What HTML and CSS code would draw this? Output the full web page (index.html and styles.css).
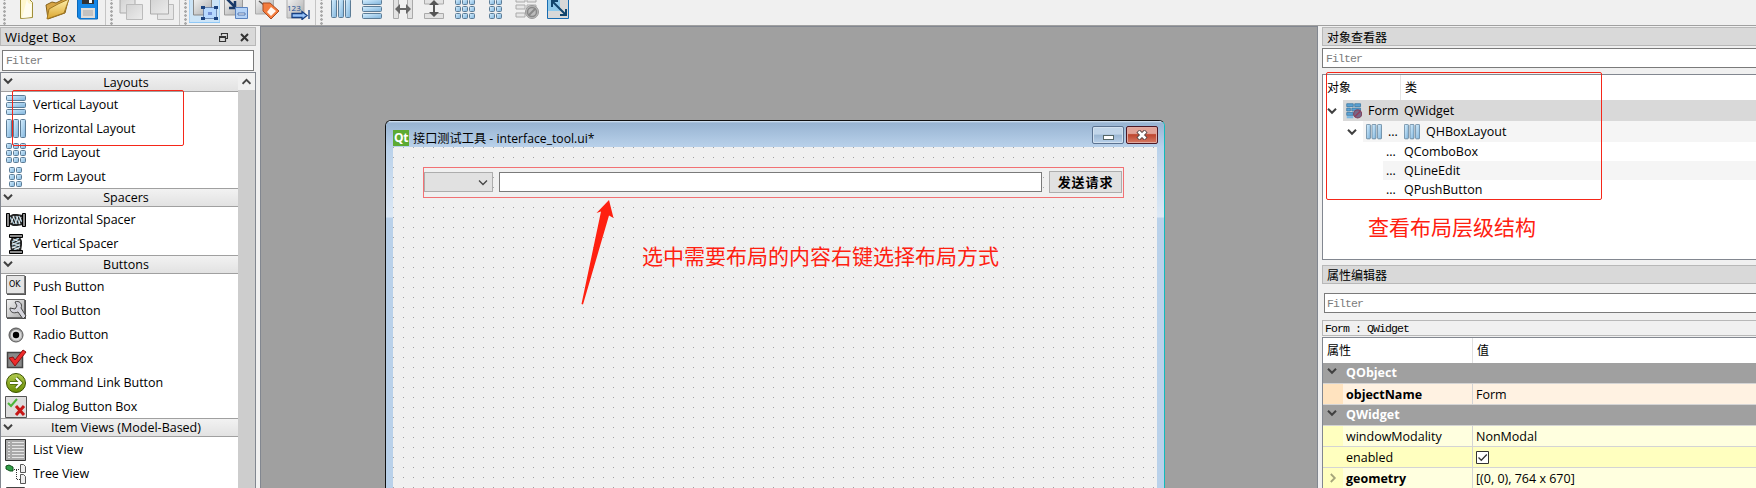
FILE: index.html
```html
<!DOCTYPE html>
<html lang="zh">
<head>
<meta charset="utf-8">
<title>Qt Designer</title>
<link rel="stylesheet" href="styles.css">
</head>
<body>
<svg class="defs" width="0" height="0">
  <defs>
    <linearGradient id="blue" x1="0" y1="0" x2="1" y2="1"><stop offset="0" stop-color="#d8f0ff"/><stop offset="1" stop-color="#7fb4dc"/></linearGradient>
    <linearGradient id="gray" x1="0" y1="0" x2="1" y2="1"><stop offset="0" stop-color="#f4f4f4"/><stop offset="1" stop-color="#aaa"/></linearGradient>
    <linearGradient id="lgray" x1="0" y1="0" x2="1" y2="1"><stop offset="0" stop-color="#d2d2d2"/><stop offset="1" stop-color="#ececec"/></linearGradient>
    <linearGradient id="dgray" x1="0" y1="0" x2="1" y2="1"><stop offset="0" stop-color="#777"/><stop offset="1" stop-color="#d0d0d0"/></linearGradient>
    <linearGradient id="gold" x1="0" y1="0" x2="0" y2="1"><stop offset="0" stop-color="#fff0ad"/><stop offset="1" stop-color="#dba52d"/></linearGradient>
    <linearGradient id="green" x1="0" y1="0" x2="0" y2="1"><stop offset="0" stop-color="#b3cc51"/><stop offset="1" stop-color="#688c00"/></linearGradient>
    <symbol id="hbox" viewBox="0 0 20 20"><g fill="url(#blue)" stroke="#5c7c96"><rect x=".5" y=".5" width="5" height="18" rx="1"/><rect x="7.500" y=".5" width="5" height="18" rx="1"/><rect x="14.500" y=".5" width="5" height="18" rx="1"/></g></symbol>
    <symbol id="vbox" viewBox="0 0 20 20"><g fill="url(#blue)" stroke="#5c7c96"><rect x=".5" y=".5" width="19" height="5" rx="1"/><rect x=".5" y="7.500" width="19" height="5" rx="1"/><rect x=".5" y="14.500" width="19" height="5" rx="1"/></g></symbol>
    <symbol id="cells" viewBox="0 0 6 20"><g fill="url(#blue)" stroke="#5c7c96"><rect x=".5" y=".5" width="5" height="5" rx="1"/><rect x=".5" y="7.500" width="5" height="5" rx="1"/><rect x=".5" y="14.500" width="5" height="5" rx="1"/></g></symbol>
    <symbol id="grid" viewBox="0 0 20 20"><use href="#cells" x="0" width="6" height="20"/><use href="#cells" x="7" width="6" height="20"/><use href="#cells" x="14" width="6" height="20"/></symbol>
    <symbol id="formlay" viewBox="0 0 20 20"><use href="#cells" x="3" width="6" height="20"/><use href="#cells" x="10" width="6" height="20"/></symbol>
    <symbol id="chev" viewBox="0 0 10 8"><path d="M1 1.800 5 5.800 9 1.800" fill="none" stroke="#404040" stroke-width="2"/></symbol>
    <symbol id="spring" viewBox="1 1 20 20"><path d="M4 7 8 5h4l6 1v10l-6 1H8l-4-2z" fill="#222"/><path d="m5 8 4 7M8 7l4 8m-1-8 4 8m-1-8 3 6" stroke="#a9c7d5" stroke-width="1.500"/><path d="m6 14 3-7m1 8 3-8m1 8 2-7" stroke="#eee"/><path d="M1.500 4.500h3v13h-3zM17.500 4.500h3v13h-3z" fill="#8a8a8a" stroke="#000"/></symbol>
  </defs>
</svg>
<div class="app">
  <header class="toolbar">
    <i class="grip first"></i>
    <span class="tool"><svg viewBox="0 0 22 22"><path d="M5.500.500h8l4 4v15l-12 1z" fill="#fff8cf" stroke="#a08f39"/><path d="M12 1c1 4 1 5 5 5l-1 13-9 1z" fill="#fffdf0"/></svg></span>
    <span class="tool"><svg class="wide" viewBox="0 0 26 22"><path d="M2 7 8 4l4 1 10-5 2 3-3 12-17 6z" fill="#d7a545" stroke="#85611b"/><path d="m5 11 9-5 11-5-5 14-17 6z" fill="url(#gold)" stroke="#a17823"/></svg></span>
    <span class="tool"><svg viewBox="0 0 22 22"><path d="M.500 0h20v21h-18l-2-2z" fill="#1688e8" stroke="#0968ba"/><path d="M5 0h12v6H5z" fill="#333"/><path d="M12 1h3v4h-3z" fill="#fff"/><path d="M4 10h14v10H4z" fill="#e0ddd9"/><path d="M6 13h10M6 15h10M6 17h10" stroke="#a7a7a7"/></svg></span>
    <i class="sep"></i><i class="grip"></i>
    <span class="tool"><svg class="wide" viewBox="0 0 26 22"><path d="M2 1h15v14H2z" fill="url(#lgray)" stroke="#aaa"/><path d="M8.500 6.500h16v15h-16z" fill="url(#lgray)" stroke="#bbb"/></svg></span>
    <span class="tool"><svg class="wide" viewBox="0 0 26 22"><path d="M8.500 6.500h16v15h-16z" fill="#e6e6e6" stroke="#bbb"/><path d="M1.500 0h18v16h-18z" fill="url(#lgray)" stroke="#aaa"/></svg></span>
    <i class="sep"></i><i class="grip"></i>
    <span class="tool active"><svg class="wide" viewBox="0 0 26 22"><path d="M1.500 0h18v17h-18z" fill="url(#gray)" stroke="#888"/><path d="M11.500 9.500h13v11h-13z" fill="#b7d9ff" stroke="#203f78" stroke-dasharray="1 1"/><path d="M9 8h4v3H9zm13 0h4v3h-4zM9 19h4v3H9zm13 0h4v3h-4z" fill="#1b427f"/><path d="M16 14h4v3h-4z" fill="#7491d6"/></svg></span>
    <span class="tool"><svg class="wide" viewBox="0 0 26 22"><path d="M1.500 0h18v17h-18z" fill="url(#gray)" stroke="#999"/><path d="m3 0 9 9M12 3v7H6" fill="none" stroke="#193968" stroke-width="2.500"/><path d="M12.500 9.500h12v11h-12z" fill="#b5d3f7" stroke="#5a82be"/><path d="M15 15h7v2h-7z" fill="#fff" stroke="#5477ae"/></svg></span>
    <span class="tool"><svg class="wide" viewBox="0 0 26 22"><path d="M1.500 0h18v16h-18z" fill="url(#gray)" stroke="#aaa"/><path d="m5 3 5 4" stroke="#555" stroke-width="1.500"/><path d="M9 5h7l9 8-8 8-8-8z" fill="#f47c3d" stroke="#a94c23"/><path d="m17 9 5 4-5 5-4-4z" fill="#fff7f0"/></svg></span>
    <span class="tool"><svg class="wide" viewBox="0 0 26 22"><path d="M2 0h17v20H2z" fill="url(#gray)" stroke="#aaa"/><text x="2" y="13" class="num">123</text><path d="M7 15.500h10v-2l5 4-5 4v-2H7zM24 12v9" fill="#96c3fa" stroke="#163f83" stroke-width="1.300"/></svg></span>
    <i class="sep"></i><i class="grip"></i>
    <span class="tool"><svg class="lay"><use href="#hbox"/></svg></span>
    <span class="tool"><svg class="lay"><use href="#vbox"/></svg></span>
    <span class="tool"><svg viewBox="0 0 22 22"><path d="M1.500 0v20.500h5V0m9 0v20.500h5V0" fill="#e2e2e2" stroke="#aaa"/><path d="m3 11 5-5v4h6V6l5 5-5 5v-4H8v4z" fill="#666"/></svg></span>
    <span class="tool"><svg viewBox="0 0 22 22"><path d="M1.500 0v6h19V0m-19 20.500v-5h19v5z" fill="#e2e2e2" stroke="#aaa"/><path d="m11 2 5 5h-4v7h4l-5 5-5-5h4V7H6z" fill="#555"/></svg></span>
    <span class="tool"><svg class="lay"><use href="#grid"/></svg></span>
    <span class="tool"><svg class="lay"><use href="#formlay"/></svg></span>
    <span class="tool"><svg class="wide" viewBox="0 0 26 22"><path d="M2 0h9v4H2zm11 0h9v4h-9zM2 7h9v4H2zm0 8h9v4H2zm11-8h9v4h-9z" fill="#e6e6e6" stroke="#aaa"/><circle cx="18" cy="14" r="6.500" fill="#bbb" stroke="#999"/><path d="m14.500 17.500 7-7" stroke="#888" stroke-width="2"/><circle cx="18" cy="14" r="4.500" fill="none" stroke="#888" stroke-width="1.500"/></svg></span>
    <span class="tool"><svg viewBox="0 0 22 22"><path d="M.500 0h21v20.500H.500z" fill="#d8d8d8" stroke="#176cb2"/><path d="M1 0h12v13H1z" fill="#8fcaec"/><path d="m6 4 12 12M5 9V3h6m8 8v6h-6" fill="none" stroke="#12466e" stroke-width="2"/></svg></span>
  </header>

  <main class="work">
    <aside class="widgets">
      <div class="dock-title"><span>Widget Box</span>
        <svg class="dock-ico" viewBox="0 0 9 9"><path d="M2.500 2.500v-2h6v5h-2M.500 3.500h6v5h-6zM.500 4.500h6" fill="none" stroke="#333" stroke-width="1.200"/></svg>
        <svg class="dock-ico x" viewBox="0 0 9 9"><path d="m1 1 7 7m0-7-7 7" stroke="#333" stroke-width="2"/></svg>
      </div>
      <div class="filter">Filter</div>
      <div class="list-box">
        <div class="list">
          <h3><svg class="chev"><use href="#chev"/></svg>Layouts</h3>
          <div class="item"><svg><use href="#vbox"/></svg>Vertical Layout</div>
          <div class="item"><svg><use href="#hbox"/></svg>Horizontal Layout</div>
          <div class="item"><svg><use href="#grid"/></svg>Grid Layout</div>
          <div class="item"><svg><use href="#formlay"/></svg>Form Layout</div>
          <h3><svg class="chev"><use href="#chev"/></svg>Spacers</h3>
          <div class="item"><svg><use href="#spring"/></svg>Horizontal Spacer</div>
          <div class="item"><svg class="turn"><use href="#spring"/></svg>Vertical Spacer</div>
          <h3><svg class="chev"><use href="#chev"/></svg>Buttons</h3>
          <div class="item up"><svg viewBox="0 0 22 22"><path d="M2 2h19v19H2z" fill="#555"/><path d="M1.500 1.500h18v18h-18z" fill="#e4e4e4" stroke="#777"/><text x="4" y="13" class="ok">OK</text></svg>Push Button</div>
          <div class="item up"><svg viewBox="0 0 22 22"><path d="M2 2h19v19H2z" fill="#555"/><path d="M1.500 1.500h18v18h-18z" fill="url(#gray)" stroke="#666"/><path d="M10 4c4-2 8 2 6 6l5 8-3 3-5-7c-5 2-8 0-8-4l5 1 2-3z" fill="#d5d5dc" stroke="#444"/></svg>Tool Button</div>
          <div class="item"><svg viewBox="0 0 22 22"><circle cx="11" cy="11" r="7" fill="url(#dgray)" stroke="#555"/><circle cx="11" cy="11" r="5.200" fill="#ddd"/><circle cx="11" cy="11" r="3.200"/></svg>Radio Button</div>
          <div class="item"><svg viewBox="0 0 22 22"><path d="M2.500 4.500h15v15h-15z" fill="#888" stroke="#444" stroke-width="1.500"/><path d="m4 10 4-1 2 3L18 2l3 2-11 14z" fill="#ee2a2a" stroke="#8b1111"/></svg>Check Box</div>
          <div class="item"><svg viewBox="0 0 22 22"><circle cx="11" cy="11" r="9.500" fill="url(#green)" stroke="#3b5200"/><path d="M5 11h10m-4-5 5 5-5 5" fill="none" stroke="#53700a" stroke-width="4"/><path d="M5 11h10m-4-5 5 5-5 5" fill="none" stroke="#fff" stroke-width="2"/></svg>Command Link Button</div>
          <div class="item"><svg viewBox="0 0 22 22"><path d="M.500.500h21v21H.500z" fill="#ddd" stroke="#555"/><path d="m3 7 3 3 6-7" fill="none" stroke="#4bb438" stroke-width="2"/><path d="m11 10 8 9m0-9-8 9" stroke="#c71717" stroke-width="3"/></svg>Dialog Button Box</div>
          <h3><svg class="chev"><use href="#chev"/></svg>Item Views (Model-Based)</h3>
          <div class="item"><svg viewBox="0 0 22 22"><path d="M.500.500h20v21H.500z" fill="#aaa" stroke="#333"/><path d="M3 3.500h2m2 0h12M3 6.500h2m2 0h12M3 9.500h2m2 0h12M3 12.500h2m2 0h12M3 15.500h2m2 0h12M3 18.500h2m2 0h12" stroke="#e6e6e6"/></svg>List View</div>
          <div class="item"><svg viewBox="0 0 22 22"><path d="m1 3 3-1 4 2v4H5L1 6z" fill="#2e9d45" stroke="#124f1d"/><path d="M9 6.500h5M11.500 7v10M12 16.500h3" fill="none" stroke="#333" stroke-dasharray="1 1"/><path d="M15.500 1.500h3l2 2v6h-5zm0 10h3l2 2v7h-5z" fill="#eee" stroke="#555"/></svg>Tree View</div>
          <div class="item"><svg viewBox="0 0 22 22"><path d="M1.500.500h18v20h-18z" fill="#ddd" stroke="#444"/></svg></div>
        </div>
        <div class="scroll"><div class="scroll-up"><svg viewBox="0 0 8 6"><path d="m.5 5 3.500-3.500L7.500 5" fill="none" stroke="#444" stroke-width="1.600"/></svg></div></div>
      </div>
      <div class="mark mark-left"></div>
    </aside>

    <section class="mdi">
      <div class="window">
        <div class="titlebar">
          <span class="qt">Qt</span><span class="caption">接口测试工具 - interface_tool.ui*</span>
          <span class="wbtn"><i></i></span>
          <span class="wbtn close"><svg viewBox="0 0 12 10"><path d="m2 1 8 8m0-8L2 9" stroke="#544" stroke-width="4.500"/><path d="m2.500 1.500 7 7m0-7-7 7" stroke="#fff" stroke-width="2.600"/></svg></span>
        </div>
        <div class="body">
          <div class="canvas">
            <div class="hlayout">
              <div class="combo"><svg viewBox="0 0 10 7"><path d="m1 1.500 4 4 4-4" fill="none" stroke="#444" stroke-width="1.300"/></svg></div>
              <div class="edit"></div>
              <div class="push">发送请求</div>
            </div>
          </div>
        </div>
      </div>
      <svg class="arrow" viewBox="0 0 36 106"><path d="M28 0 32.500 18 28 15.500 2 104.500 .5 104 20 11.500 15.500 13z" fill="#ff2010"/></svg>
      <div class="note note-main">选中需要布局的内容右键选择布局方式</div>
    </section>

    <aside class="inspect">
      <div class="dock-title">对象查看器</div>
      <div class="filter">Filter</div>
      <div class="tree">
        <div class="thead"><span>对象</span><span>类</span></div>
        <div class="trow r1"><svg class="chev"><use href="#chev"/></svg><div class="fill"><svg class="ti" viewBox="0 0 22 22"><path d="M1 1h9v4H1zm11 0h8v4h-8zM1 7h5v4H1zm7 0h12v4H8zM1 13h9v4H1zm11 0h8v4h-8z" fill="#5ba2d4" stroke="#34729f"/><path d="M1 18h9v3H1z" fill="#7ab8e2"/><circle cx="16" cy="15" r="5.500" fill="#766989" stroke="#82445f" stroke-width="1.500"/><path d="m12 19 8-8" stroke="#943e5c" stroke-width="2"/></svg><span class="nm">Form</span><span>QWidget</span></div></div>
        <div class="trow r2"><svg class="chev"><use href="#chev"/></svg><div class="fill"><svg class="ti"><use href="#hbox"/></svg><span class="nm">...</span><svg class="ti"><use href="#hbox"/></svg><span>QHBoxLayout</span></div></div>
        <div class="trow r3"><div class="fill"><span class="nm">...</span><span>QComboBox</span></div></div>
        <div class="trow r3 alt"><div class="fill"><span class="nm">...</span><span>QLineEdit</span></div></div>
        <div class="trow r3"><div class="fill"><span class="nm">...</span><span>QPushButton</span></div></div>
      </div>
      <div class="dock-title second">属性编辑器</div>
      <div class="filter inset">Filter</div>
      <div class="objname">Form : QWidget</div>
      <div class="props">
        <div class="phead"><span>属性</span><span>值</span></div>
        <div class="group"><svg class="chev"><use href="#chev"/></svg>QObject</div>
        <div class="prow peach"><i></i><b>objectName</b><span>Form</span></div>
        <div class="group"><svg class="chev"><use href="#chev"/></svg>QWidget</div>
        <div class="prow"><i></i><span class="key">windowModality</span><span>NonModal</span></div>
        <div class="prow deep"><i></i><span class="key">enabled</span><span><svg class="check" viewBox="0 0 13 13"><path d="M.500.500h12v12H.500z" fill="#fff" stroke="#333"/><path d="m2.500 6.500 2.800 2.800L10.800 3.500" fill="none" stroke="#333" stroke-width="1.300"/></svg></span></div>
        <div class="prow"><i><svg class="chev right" viewBox="0 0 10 8"><path d="M1 1.800 5 5.800 9 1.800" fill="none" stroke="#a5a57a" stroke-width="1.800"/></svg></i><b>geometry</b><span>[(0, 0), 764 x 670]</span></div>
      </div>
      <div class="mark mark-right"></div>
      <div class="note note-right">查看布局层级结构</div>
    </aside>
  </main>
</div>
</body>
</html>
```
FILE: styles.css
```css
* { box-sizing: border-box; }
body { margin: 0; overflow: hidden; }
.defs { position: absolute; }
.app { width: 1756px; height: 488px; overflow: hidden; display: flex; flex-direction: column; background: #f0f0f0; color: #000; font: 13px/18px "Open Sans", "Noto Sans CJK SC", sans-serif; }
svg { display: block; flex: none; }

.toolbar { height: 26px; flex: none; display: flex; border-bottom: 1px solid #a0a0a0; overflow: hidden; }
.tool { width: 31px; height: 23px; display: flex; justify-content: center; }
.tool svg { width: 22px; height: 22px; margin-top: -2px; }
.tool svg.wide { width: 26px; }
.tool svg.lay { width: 20px; height: 20px; margin-top: -1px; }
.tool.active { background: #cce4f7; border-bottom: 1px solid #90c8f6; box-shadow: inset 1px 0 #a9d3f5, inset -1px 0 #a9d3f5; }
.num { font: 8px "Open Sans", sans-serif; fill: #174d91; }
.ok { font: 8px "DejaVu Sans", sans-serif; fill: #000; }
.grip { width: 8px; height: 25px; background: radial-gradient(circle at 1.500px 1.500px, #aaa 1.200px, transparent 1.500px) 3px 2px / 6px 4px repeat-y; }
.grip.first { width: 10px; }
.sep { width: 4px; height: 25px; background: linear-gradient(#c5c5c5, #c5c5c5) 2px 0 / 1px 100% no-repeat; }

.work { flex: 1; min-height: 0; display: flex; }
.dock-title { height: 19px; display: flex; align-items: center; padding: 1px 4px 0; border: 1px solid #b8b8b8; background: #d9d9d9; }
.filter { height: 21px; padding-left: 3px; border: 1px solid #7a7a7a; background: #fff; color: #7c7c7c; font: 11.500px/19px "Liberation Mono", monospace; letter-spacing: -.9px; }
.chev { width: 10px; height: 8px; }

.widgets { position: relative; width: 260px; height: 462px; flex: none; display: flex; flex-direction: column; padding-top: 1px; }
.widgets .dock-title { width: 256px; letter-spacing: .2px; }
.dock-title span { flex: 1; }
.dock-ico { width: 9px; height: 9px; margin-right: 12px; }
.dock-ico.x { margin-right: 2px; }
.widgets .filter { width: 252px; margin: 4px 0 1px 2px; }
.list-box { width: 256px; flex: 1; min-height: 0; display: flex; border: 1px solid #828790; border-bottom: 0; background: #fff; overflow: hidden; }
.list { width: 237px; }
.list h3 { position: relative; height: 19px; margin: 0; font-size: 12.500px; font-weight: 400; line-height: 18px; text-align: center; padding-left: 13px; background: linear-gradient(#f2f2f2, #e2e2e2); border-top: 1px solid #a0a0a0; border-bottom: 1px solid #a0a0a0; }
.list h3:first-child { border-top: 0; line-height: 20px; }
.list h3 .chev { position: absolute; left: 2px; top: 4px; }
.item { height: 24px; display: flex; align-items: center; gap: 6px; padding: 2px 0 0 4px; white-space: nowrap; font-size: 12.500px; letter-spacing: -.05px; }
.item svg { width: 22px; height: 22px; margin-top: -1px; }
.item svg:has(use) { width: 20px; height: 20px; margin: 0 1px; }
.item.up svg { margin-top: -4px; }
.turn { transform: rotate(90deg); }
.scroll { width: 17px; background: #cdcdcd; }
.scroll-up { height: 17px; background: #f0f0f0; display: flex; align-items: center; justify-content: center; }
.scroll-up svg { width: 9px; height: 7px; }

.mdi { position: relative; width: 1057px; flex: none; background: #a0a0a0; border-left: 1px solid #828790; border-top: 1px solid #828790; overflow: hidden; }
.window { width: 780px; height: 700px; margin: 93px 0 0 124px; border: 1px solid #111; border-right-color: #1bb; border-radius: 6px 6px 0 0; background: #b9d1ea; box-shadow: inset 1px 1px #e7f2fc; overflow: hidden; }
.titlebar { height: 26px; display: flex; padding: 5px 6px 0 7px; background: linear-gradient(#dceaf7 0, #98b4d2 2px, #b9d1ea); }
.qt { width: 16px; height: 16px; margin-top: 4px; background: #5caa32; color: #fff; font: bold 12px/15px "Open Sans", sans-serif; text-align: center; letter-spacing: -.5px; }
.caption { flex: 1; padding: 1px 0 0 4px; line-height: 24px; font-size: 12.200px; }
.wbtn { width: 32px; height: 18px; margin-left: 2px; display: flex; align-items: center; justify-content: center; border: 1px solid #5b7290; border-radius: 2px; background: linear-gradient(#c1d5e9 45%, #9bb6d2 50%, #b9d1ea); box-shadow: inset 0 0 0 1px #d2e1ef; }
.wbtn i { width: 11px; height: 5px; margin-top: 4px; background: #fff; border: 1px solid #566; }
.wbtn.close { background: linear-gradient(#e2a398 40%, #bd452e 48%, #d67b65); border-color: #4d1724; box-shadow: inset 0 0 0 1px #e1aaa0; }
.wbtn.close svg { width: 12px; height: 10px; }
.body { padding: 0 7px; background: linear-gradient(#b9d1ea, #dce8f5 70px, #b9d1ea 71px); }
.canvas { width: 764px; height: 500px; padding: 20px 0 0 30px; background: conic-gradient(from 270deg at 1px 1px, #a0a0a0 25%, transparent 0) 0 0 / 10px 10px, #f0f0f0; }
.hlayout { width: 701px; height: 31px; display: flex; align-items: center; border: 1px solid #f27174; }
.combo { width: 69px; height: 20px; margin-top: -1px; display: flex; align-items: center; justify-content: flex-end; padding-right: 4px; background: #e1e1e1; border: 1px solid #adadad; }
.combo svg { width: 10px; height: 7px; }
.edit { width: 543px; height: 20px; margin: -1px 7px 0 6px; background: #fff; border: 1px solid #7a7a7a; }
.push { width: 73px; height: 22px; margin-top: -1px; background: #e1e1e1; border: 1px solid #adadad; text-align: center; font: bold 13px/20px "Noto Sans CJK SC", sans-serif; letter-spacing: .9px; }
.arrow { position: absolute; left: 320px; top: 173px; width: 36px; height: 106px; }
.note { position: absolute; color: #ff2010; font: 21px/28px "Noto Sans CJK SC", sans-serif; white-space: nowrap; }
.note-main { left: 381px; top: 214px; }
.note-right { left: 50px; top: 186px; }
.mark { position: absolute; border: 1px solid #f52719; border-radius: 2px; }
.mark-left { left: 12px; top: 64px; width: 172px; height: 56px; }
.mark-right { left: 8px; top: 46px; width: 276px; height: 128px; }

.inspect { position: relative; flex: 1; min-width: 0; padding: 1px 0 0 4px; border-left: 1px solid #828790; overflow: hidden; font-size: 12.500px; }
.inspect .dock-title { font-size: 12px; border-right: 0; padding-top: 3px; }
.inspect .filter { margin-top: 2px; border-right: 0; height: 20px; line-height: 19px; }
.tree { height: 186px; margin: 6px 0 5px; border: 1px solid #828790; border-right: 0; background: #fff; }
.thead { height: 25px; display: flex; line-height: 26px; font-size: 12px; }
.thead span:first-child { width: 78px; padding-left: 4px; border-right: 1px solid #e5e5e5; }
.thead span + span { padding-left: 4px; }
.trow { height: 19px; display: flex; align-items: center; }
.trow.r1, .trow.r2 { height: 21px; }
.trow .chev { margin: 0 6px 0 4px; }
.r2 { padding-left: 20px; }
.r3 { padding-left: 60px; }
.fill { flex: 1; height: 100%; display: flex; align-items: center; }
.r1 .fill { background: #d9d9d9; }
.r2 .fill, .alt .fill { background: #f5f5f5; }
.ti { width: 16px; height: 16px; }
.r1 .ti { margin-left: 3px; }
.r1 .nm { width: 36px; margin-left: 6px; }
.r2 .ti { margin-left: 3px; }
.r2 .nm { width: 16px; margin-left: 6px; }
.r2 .nm + .ti { margin: 0 6px 0 0; }
.r3 .nm { width: 18px; margin-left: 3px; }
.inspect .dock-title.second { margin: 0; }
.inspect .filter.inset { margin: 9px 0 7px 2px; padding-left: 2px; }
.objname { height: 16px; padding-left: 2px; border: 1px solid #b8b8b8; border-right: 0; font: 11.500px/15px "Liberation Mono", monospace; letter-spacing: -.9px; }
.props { margin-top: 1px; border: 1px solid #828790; border-right: 0; background: #fff; }
.phead { height: 25px; display: flex; line-height: 25px; font-size: 12px; }
.phead span:first-child { width: 150px; padding-left: 4px; border-right: 1px solid #e0e0e0; }
.phead span + span { padding-left: 4px; }
.group { height: 21px; display: flex; align-items: center; gap: 9px; padding-left: 4px; background: #a0a0a0; color: #fff; font-weight: 700; border-bottom: 1px solid #d4d4d4; }
.group .chev { margin-top: -4px; }
.prow { height: 21px; display: flex; line-height: 21px; background: #ffffdf; border-bottom: 1px solid #d4d4d4; }
.prow i { width: 20px; background: #ffffbf; display: flex; align-items: center; justify-content: center; }
.prow b, .prow .key { width: 130px; padding-left: 3px; border-right: 1px solid #d4d4d4; }
.prow > span:last-child { padding-left: 3px; }
.prow.deep { background: #ffffbf; }
.prow.peach { background: #fff2e2; }
.prow.peach i { background: #ffe3bf; }
.right { transform: rotate(-90deg); }
.check { width: 13px; height: 13px; margin-top: 4px; }
```
